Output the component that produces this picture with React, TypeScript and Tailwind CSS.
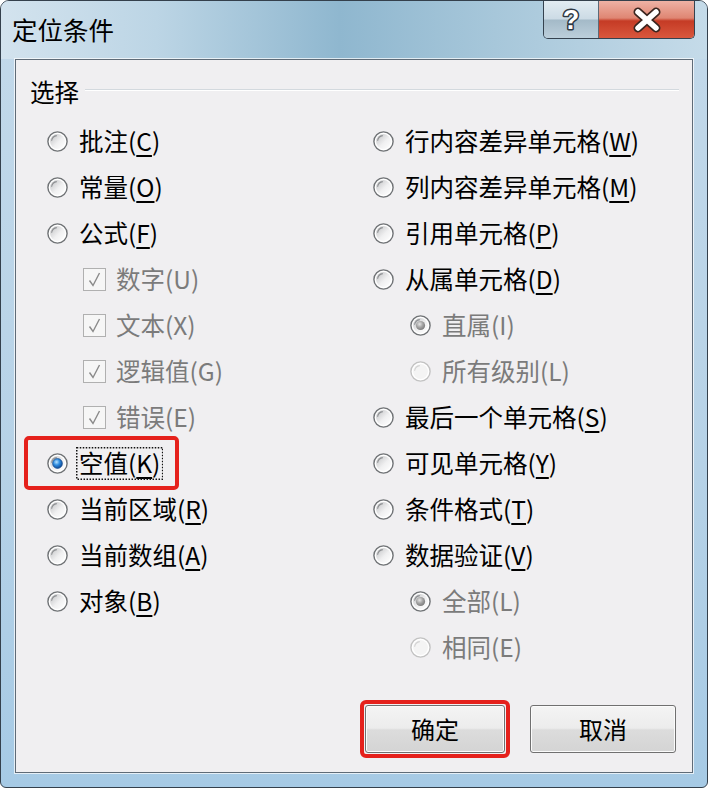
import React from 'react';

type Kind = 'radio' | 'check' | 'sub';

interface Option {
  label: string;
  hotkey: string;
  kind: Kind;
  disabled?: boolean;
  checked?: boolean;
  marked?: boolean;
}

const LEFT: Option[] = [
  { label: '批注', hotkey: 'C', kind: 'radio' },
  { label: '常量', hotkey: 'O', kind: 'radio' },
  { label: '公式', hotkey: 'F', kind: 'radio' },
  { label: '数字', hotkey: 'U', kind: 'check', disabled: true, checked: true },
  { label: '文本', hotkey: 'X', kind: 'check', disabled: true, checked: true },
  { label: '逻辑值', hotkey: 'G', kind: 'check', disabled: true, checked: true },
  { label: '错误', hotkey: 'E', kind: 'check', disabled: true, checked: true },
  { label: '空值', hotkey: 'K', kind: 'radio', checked: true, marked: true },
  { label: '当前区域', hotkey: 'R', kind: 'radio' },
  { label: '当前数组', hotkey: 'A', kind: 'radio' },
  { label: '对象', hotkey: 'B', kind: 'radio' },
];

const RIGHT: Option[] = [
  { label: '行内容差异单元格', hotkey: 'W', kind: 'radio' },
  { label: '列内容差异单元格', hotkey: 'M', kind: 'radio' },
  { label: '引用单元格', hotkey: 'P', kind: 'radio' },
  { label: '从属单元格', hotkey: 'D', kind: 'radio' },
  { label: '直属', hotkey: 'I', kind: 'sub', disabled: true, checked: true },
  { label: '所有级别', hotkey: 'L', kind: 'sub', disabled: true },
  { label: '最后一个单元格', hotkey: 'S', kind: 'radio' },
  { label: '可见单元格', hotkey: 'Y', kind: 'radio' },
  { label: '条件格式', hotkey: 'T', kind: 'radio' },
  { label: '数据验证', hotkey: 'V', kind: 'radio' },
  { label: '全部', hotkey: 'L', kind: 'sub', disabled: true, checked: true },
  { label: '相同', hotkey: 'E', kind: 'sub', disabled: true },
];

function Radio({ checked, disabled }: { checked?: boolean; disabled?: boolean }) {
  const faint = disabled && !checked;
  return (
    <svg width="21" height="21" viewBox="0 0 21 21" className="shrink-0">
      <defs>
        <linearGradient id="rfill" x1="0" y1="0" x2="1" y2="1">
          <stop offset="0" stopColor="#bfc0c2" />
          <stop offset="0.55" stopColor="#f0f0f1" />
          <stop offset="1" stopColor="#ffffff" />
        </linearGradient>
        <radialGradient id="rblue" cx="0.4" cy="0.35" r="0.7">
          <stop offset="0" stopColor="#b9e3ff" />
          <stop offset="0.45" stopColor="#2f8de0" />
          <stop offset="1" stopColor="#0b3f8a" />
        </radialGradient>
        <radialGradient id="rgray" cx="0.4" cy="0.35" r="0.7">
          <stop offset="0" stopColor="#e6e6e6" />
          <stop offset="0.5" stopColor="#a4a4a4" />
          <stop offset="1" stopColor="#767676" />
        </radialGradient>
      </defs>
      <circle cx="10.5" cy="10.5" r="9.6" fill="#ffffff" stroke={faint ? '#c2c2c2' : '#6f7275'} strokeWidth="1.4" />
      <circle cx="10.5" cy="10.5" r="7.4" fill={faint ? '#f4f4f4' : 'url(#rfill)'} />
      <path d="M4.6 9.8 A6 6 0 0 1 9.8 4.6" fill="none" stroke={faint ? '#d2d2d2' : '#8d8f92'} strokeWidth="1.1" />
      {checked && !disabled && <circle cx="10.5" cy="10.5" r="4.9" fill="url(#rblue)" stroke="#174c8e" strokeWidth="0.7" />}
      {checked && disabled && <circle cx="10.5" cy="10.5" r="4.6" fill="url(#rgray)" />}
    </svg>
  );
}

function Check() {
  return (
    <svg width="23" height="23" viewBox="0 0 23 23" className="shrink-0">
      <rect x="0.5" y="0.5" width="22" height="22" fill="#f6f6f6" stroke="#b0b0b0" />
      <path d="M6.5 12.5 L10 17.5 L16.5 5" fill="none" stroke="#8a8a8a" strokeWidth="1.4" />
    </svg>
  );
}

// dotted keyboard-focus rectangle drawn over the label
function FocusRect() {
  return (
    <svg className="pointer-events-none absolute inset-0 h-full w-full" preserveAspectRatio="none">
      <rect x="0.75" y="0.75" width="calc(100% - 1.5px)" height="calc(100% - 1.5px)" fill="none" stroke="#111" strokeWidth="1.5" strokeDasharray="1.5 1.5" />
    </svg>
  );
}

function Row({ o }: { o: Option }) {
  const text = o.disabled ? 'text-[#7b7b7b]' : 'text-black';
  const label = (
    <span className={`${text} text-[24.5px] leading-[30px] whitespace-nowrap`}>
      {o.label}(
      {o.disabled ? o.hotkey : <span className="underline underline-offset-[4px] decoration-[1.5px]">{o.hotkey}</span>}
      )
    </span>
  );
  return (
    <div className="relative flex h-[46px] items-center">
      {o.kind === 'check' && (
        <div className="flex items-center gap-[10px] pl-[36px]">
          <Check />
          {label}
        </div>
      )}
      {o.kind === 'sub' && (
        <div className="flex items-center gap-[11px] pl-[37px]">
          <Radio checked={o.checked} disabled />
          {label}
        </div>
      )}
      {o.kind === 'radio' && (
        <div className="flex items-center gap-[11px]">
          <Radio checked={o.checked} />
          {o.marked ? (
            <span className="relative -ml-[3px] flex h-[33px] items-center px-[3px]">
              {label}
              <FocusRect />
            </span>
          ) : (
            label
          )}
        </div>
      )}
      {o.marked && (
        <span className="absolute left-[-23px] top-[-4px] h-[54px] w-[155px] rounded-[5px] border-[4px] border-[#e5211c]" />
      )}
    </div>
  );
}

function WinButton({ children, marked, width }: { children: React.ReactNode; marked?: boolean; width: string }) {
  return (
    <div className={`relative ${width} h-[48px]`}>
      <button className="flex h-full w-full items-center justify-center rounded-[3px] border border-[#707070] bg-[linear-gradient(180deg,#f4f4f4_0%,#ececec_48%,#dcdcdc_52%,#d4d4d4_100%)] text-[24px] text-black shadow-[inset_0_0_0_1px_#fbfbfb]">
        {children}
      </button>
      {marked && (
        <span className="absolute -inset-[5px] rounded-[6px] border-[4px] border-[#e5211c]" />
      )}
    </div>
  );
}

export default function App() {
  return (
    <div className="h-[788px] w-[708px] font-['Noto_Sans_CJK_SC','Noto_Sans',sans-serif]">
      <div className="flex h-full w-full flex-col overflow-hidden rounded-t-[9px] rounded-b-[6px] border border-[#34404c] bg-[linear-gradient(180deg,#c3d9ea_0%,#b6d2e7_60%,#a6cae5_100%)]">
        <div className="flex h-[58px] shrink-0 items-start justify-between bg-[linear-gradient(90deg,#d3e3ee_0%,#bcd5e5_22%,#8fb7cf_48%,#a7c7da_70%,#c5dbe9_100%)]">
          <span className="pl-[11px] pt-[12px] text-[25.5px] leading-[32px] text-black">定位条件</span>
          <div className="mr-[12px] flex h-[38px] overflow-hidden rounded-b-[5px] border border-t-0 border-[#35424f]">
            <div className="flex w-[55px] items-center justify-center border-r border-[#5b6a77] bg-[linear-gradient(180deg,#e2ecf2_0%,#ccdbe5_48%,#a4bac8_52%,#bccfdb_100%)]">
              <svg width="26" height="30" viewBox="0 0 26 30">
                <text x="13" y="24" textAnchor="middle" fontFamily="Liberation Sans, sans-serif" fontWeight="bold" fontSize="27" fill="#ffffff" stroke="#2d3843" strokeWidth="3" paintOrder="stroke" strokeLinejoin="round">?</text>
              </svg>
            </div>
            <div className="flex w-[95px] items-center justify-center bg-[linear-gradient(180deg,#eeb2a5_0%,#df8673_46%,#c53b25_54%,#d9573d_100%)]">
              <svg width="34" height="26" viewBox="0 0 34 26">
                <path d="M8 5 L26 21 M26 5 L8 21" stroke="#3a2620" strokeWidth="9" strokeLinecap="round" />
                <path d="M8 5 L26 21 M26 5 L8 21" stroke="#ffffff" strokeWidth="5.5" strokeLinecap="round" />
              </svg>
            </div>
          </div>
        </div>
        <div className="flex flex-1 px-[14px] pb-[14px]">
          <div className="flex flex-1 flex-col border border-[#5f6b77] bg-[#f0eff1] shadow-[0_0_0_1px_rgba(255,255,255,0.7)]">
            <div className="flex h-[47px] items-end pl-[14px] pr-[13px]">
              <span className="text-[24.5px] leading-[30px] text-black">选择</span>
              <div className="ml-[6px] mb-[16px] flex-1 border-t border-b border-t-[#d3d9de] border-b-[#ffffff]" />
            </div>
            <div className="mt-[11px] flex pl-[31px]">
              <div className="flex w-[326px] flex-col">
                {LEFT.map((o) => (
                  <Row key={o.label} o={o} />
                ))}
              </div>
              <div className="flex flex-col">
                {RIGHT.map((o) => (
                  <Row key={o.label} o={o} />
                ))}
              </div>
            </div>
            <div className="mt-[35px] flex justify-end gap-[25px] pr-[16px]">
              <WinButton width="w-[140px]" marked>
                确定
              </WinButton>
              <WinButton width="w-[146px]">取消</WinButton>
            </div>
          </div>
        </div>
      </div>
    </div>
  );
}
